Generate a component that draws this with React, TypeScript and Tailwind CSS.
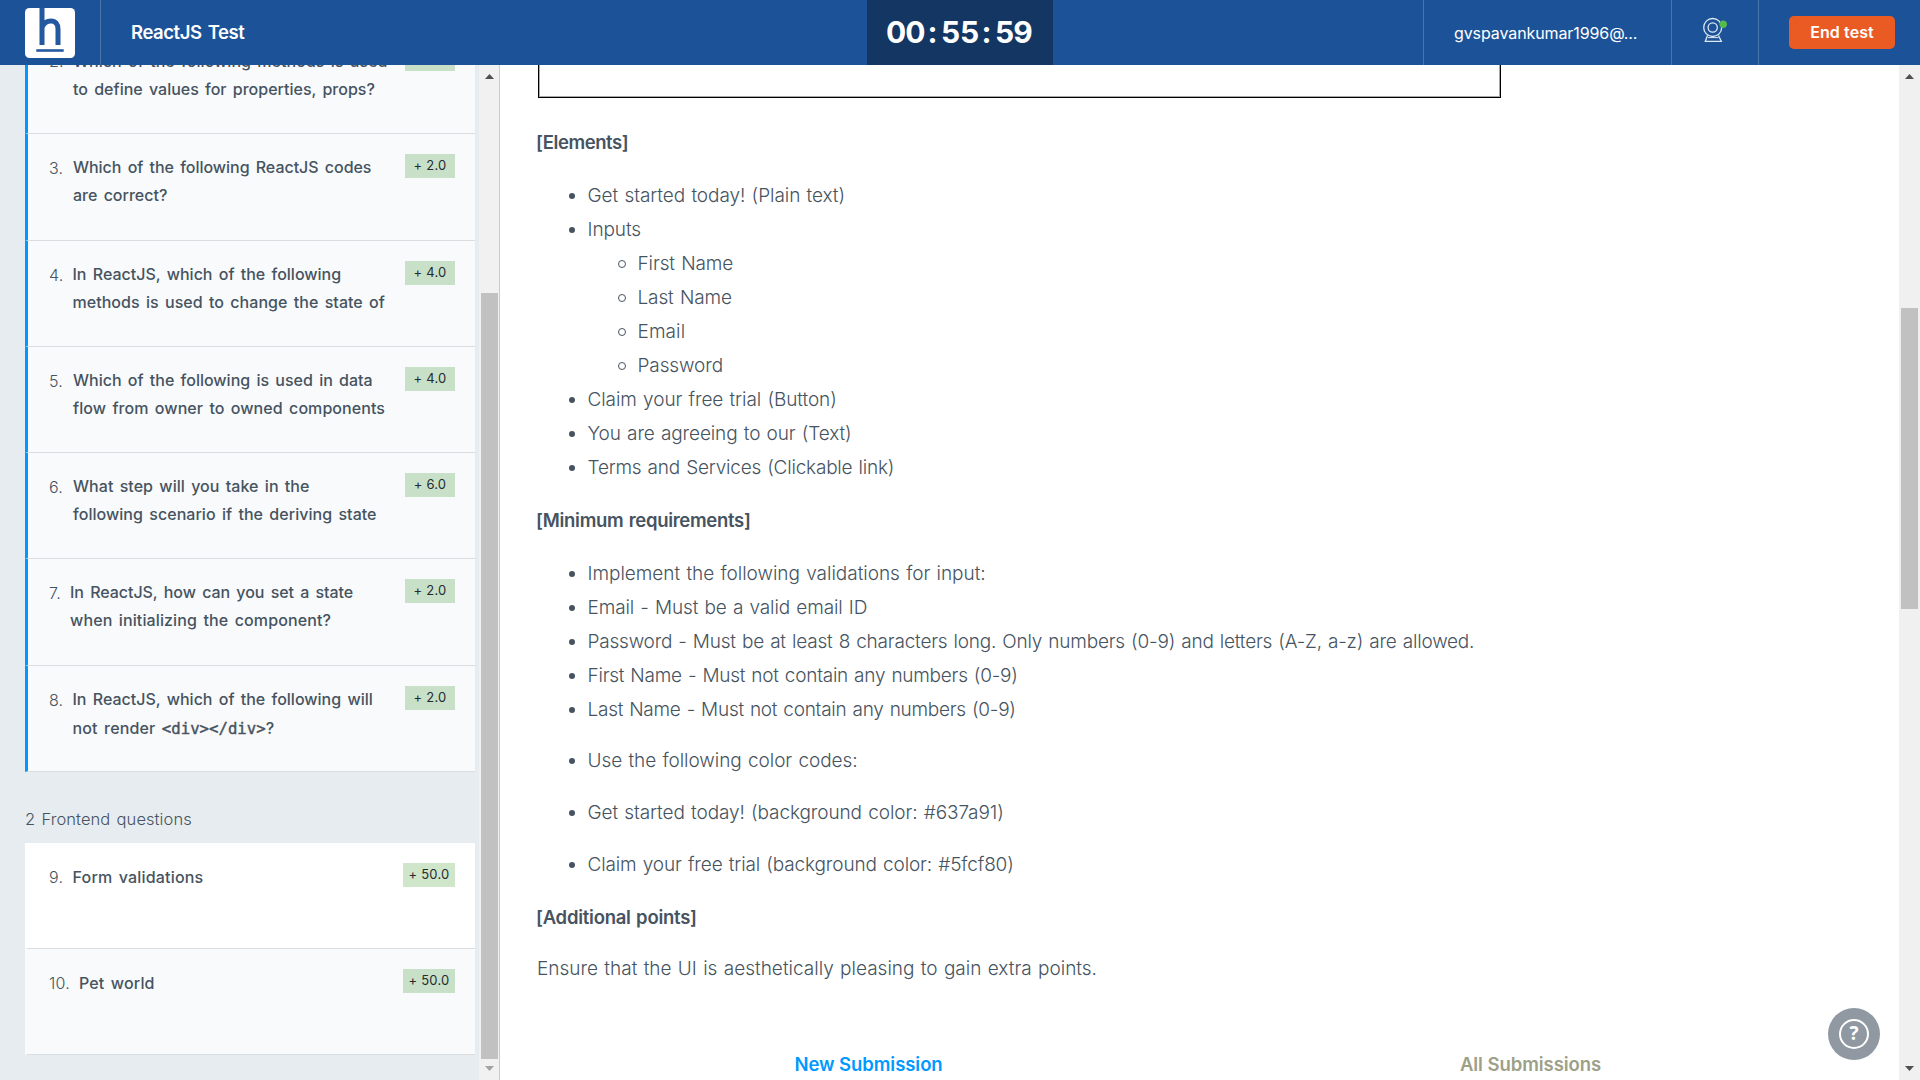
import type { ReactNode } from "react";

type Question = {
  num: string;
  numWidth: string;
  lines: { text: ReactNode; tracking?: string }[];
  score: string;
  height: string;
  textTop?: string;
  open?: boolean;
};

const codingQuestions: Question[] = [
  {
    num: "2.",
    numWidth: "w-[24px]",
    lines: [
      { text: "Which of the following methods is used", tracking: "tracking-[0.04px]" },
      { text: "to define values for properties, props?" },
    ],
    score: "+ 2.0",
    height: "h-[107px]",
    textTop: "mt-5",
  },
  {
    num: "3.",
    numWidth: "w-[24px]",
    lines: [{ text: "Which of the following ReactJS codes", tracking: "tracking-[-0.03px]" }, { text: "are correct?" }],
    score: "+ 2.0",
    height: "h-[107px]",
  },
  {
    num: "4.",
    numWidth: "w-[23.5px]",
    lines: [
      { text: "In ReactJS, which of the following" },
      { text: "methods is used to change the state of", tracking: "tracking-[0.04px]" },
    ],
    score: "+ 4.0",
    height: "h-[106px]",
  },
  {
    num: "5.",
    numWidth: "w-[24px]",
    lines: [
      { text: "Which of the following is used in data" },
      { text: "flow from owner to owned components", tracking: "tracking-[0.07px]" },
    ],
    score: "+ 4.0",
    height: "h-[106px]",
  },
  {
    num: "6.",
    numWidth: "w-[24px]",
    lines: [
      { text: "What step will you take in the", tracking: "tracking-[0.04px]" },
      { text: "following scenario if the deriving state", tracking: "tracking-[0.04px]" },
    ],
    score: "+ 6.0",
    height: "h-[106px]",
  },
  {
    num: "7.",
    numWidth: "w-[21px]",
    lines: [
      { text: "In ReactJS, how can you set a state", tracking: "tracking-[-0.04px]" },
      { text: "when initializing the component?", tracking: "tracking-[0.12px]" },
    ],
    score: "+ 2.0",
    height: "h-[107px]",
  },
  {
    num: "8.",
    numWidth: "w-[23.5px]",
    lines: [
      { text: "In ReactJS, which of the following will" },
      {
        text: (
          <div className="mt-px">
            <span className="tracking-[0.15px]">not render </span>
            <code className="bg-[#f9f9f9] font-['DejaVu_Sans_Mono',monospace] text-[15.7px] leading-none font-normal [-webkit-text-stroke:0.4px]">
              {"<div></div>"}
            </code>
            ?
          </div>
        ),
      },
    ],
    score: "+ 2.0",
    height: "h-[106px]",
  },
];

const frontendQuestions: Question[] = [
  {
    num: "9.",
    numWidth: "w-[23.5px]",
    lines: [{ text: "Form validations", tracking: "tracking-[0.18px]" }],
    score: "+ 50.0",
    height: "h-[106px]",
    textTop: "mt-5",
    open: true,
  },
  {
    num: "10.",
    numWidth: "w-[30px]",
    lines: [{ text: "Pet world", tracking: "tracking-[0.15px]" }],
    score: "+ 50.0",
    height: "h-[106px]",
    textTop: "mt-5",
  },
];

function QuestionCard({ q, bar }: { q: Question; bar: string }) {
  return (
    <li
      className={`flex shrink-0 items-start border-b border-l-[3px] border-b-[#dadee0] pl-[21px] ${bar} ${q.height} ${
        q.open ? "bg-white" : "bg-[#f8fafc]"
      }`}
    >
      <span className={`mt-5 shrink-0 text-[16px] leading-7 font-light tracking-[0.2px] ${q.numWidth}`}>{q.num}</span>
      <div
        className={`flex-1 text-[16px] leading-7 font-medium whitespace-nowrap [word-spacing:2px] ${
          q.textTop ?? "mt-[19px]"
        }`}
      >
        {q.lines.map((line, i) => (
          <div key={i} className={line.tracking}>
            {line.text}
          </div>
        ))}
      </div>
      <span
        className={`mt-5 mr-5 h-[24px] shrink-0 text-center text-[13px] leading-[22px] tracking-[0.2px] text-[#262b30] ${
          q.score.length > 5 ? "w-[52px]" : "w-[50px]"
        } ${q.open ? "bg-[#cfe6cb]" : "bg-[#c8e0c8]"}`}
      >
        {q.score}
      </span>
    </li>
  );
}

function Logo() {
  return (
    <svg width="50" height="50" viewBox="0 0 50 50" className="ml-[25px]">
      <rect width="50" height="50" rx="4.5" fill="#fff" />
      <path
        d="M17 0V37M17 19.500C18.500 15.500 22 13 26 13C30.500 13 33 16 33 21V37"
        fill="none"
        stroke="#2459a0"
        strokeWidth="5"
      />
      <path d="M11.300 42.500H38.700" stroke="#2459a0" strokeWidth="2.600" />
    </svg>
  );
}

function WebcamIcon() {
  return (
    <svg width="28" height="28" viewBox="0 0 28 28" fill="none" stroke="#dfe9f5" strokeWidth="1.300">
      <circle cx="11.700" cy="12.500" r="9" />
      <circle cx="11.700" cy="12.500" r="4.600" />
      <path d="M6.500 20.500L4.300 26.300H20.300L17.500 20.500" />
      <path d="M7 22.600H17.500" strokeWidth="1" />
      <circle cx="22.200" cy="9.200" r="3.700" fill="#57bb4c" stroke="none" />
    </svg>
  );
}

function Arrow({ down, faded }: { down?: boolean; faded?: boolean }) {
  return (
    <svg width="9" height="5" viewBox="0 0 9 5" className={faded ? "fill-[#a3a3a3]" : "fill-[#505050]"}>
      <path d={down ? "M0 0H9L4.500 5Z" : "M0 5H9L4.500 0Z"} />
    </svg>
  );
}

function Header() {
  return (
    <header className="flex h-[65px] shrink-0 bg-[#1c5398] text-white">
      <div className="flex w-[101px] border-r border-[#4975ac] pt-2">
        <Logo />
      </div>
      <h1 className="flex w-[766px] items-center pl-[30px] text-[18.5px] font-semibold tracking-[-0.45px] [word-spacing:2px]">
        ReactJS Test
      </h1>
      <div className="flex w-[186px] items-center bg-[#133662] pb-px pl-[19px] text-[30px] font-bold">
        <span className="w-[38px] tracking-[-0.9px]">00</span>
        <span className="w-[17px] text-center">:</span>
        <span className="w-[37px] tracking-[-0.2px]">55</span>
        <span className="w-[17px] text-center">:</span>
        <span className="tracking-[-0.9px]">59</span>
      </div>
      <div className="flex-1" />
      <div className="flex w-[249px] items-center border-r border-l border-[#4975ac] pl-[30px] text-[16px] tracking-[-0.1px]">
        gvspavankumar1996@...
      </div>
      <div className="flex w-[87px] border-r border-[#4975ac] pt-[15px] pl-[29px]">
        <WebcamIcon />
      </div>
      <div className="flex w-[161px] items-center pl-[30px]">
        <button className="h-[33px] w-[106px] rounded-[5px] bg-[#ea5b24] pb-px text-[16px] font-semibold tracking-[0.1px]">
          End test
        </button>
      </div>
    </header>
  );
}

function Sidebar() {
  return (
    <aside className="flex w-[500px] shrink-0 border-r border-[#cbcbcb] bg-[#e6ecef]">
      <div className="flex w-[479px] flex-col overflow-hidden pr-1 pl-[25px]">
        <ul className="-mt-[38px] flex flex-col">
          {codingQuestions.map((q) => (
            <QuestionCard key={q.num} q={q} bar="border-l-[#0099ff]" />
          ))}
        </ul>
        <h2 className="mt-[33px] h-[28px] text-[16.5px] leading-7 font-light tracking-[0.08px] whitespace-nowrap [word-spacing:1.5px]">
          2 Frontend questions
        </h2>
        <ul className="mt-[10px] flex flex-col">
          {frontendQuestions.map((q) => (
            <QuestionCard key={q.num} q={q} bar={q.open ? "border-l-white" : "border-l-[#f8fafc]"} />
          ))}
        </ul>
      </div>
      <div className="flex w-5 flex-col items-center bg-[#f1f1f1]">
        <div className="flex h-[228px] pt-[9px]">
          <Arrow />
        </div>
        <div className="h-[766px] w-[17px] bg-[#c1c1c1]" />
        <div className="pt-[7px]">
          <Arrow down faded />
        </div>
      </div>
    </aside>
  );
}

function Heading({ children, className }: { children: ReactNode; className: string }) {
  return <h3 className={`text-[18.5px] leading-[34px] font-semibold whitespace-nowrap ${className}`}>{children}</h3>;
}

function Item({ children, className = "", hollow }: { children: ReactNode; className?: string; hollow?: boolean }) {
  return (
    <li className={`flex h-[34px] items-center whitespace-nowrap ${className}`}>
      {hollow ? (
        <span className="mr-[11.5px] size-2 rounded-full border border-[#465360]" />
      ) : (
        <span className="mr-[12.5px] size-1.5 rounded-full bg-[#465360]" />
      )}
      {children}
    </li>
  );
}

function Problem() {
  return (
    <main className="flex w-[1399px] flex-col overflow-hidden pr-[38px] pl-[37px] text-[19px] font-light [word-spacing:1px]">
      <div className="ml-px h-[33px] w-[963px] shrink-0 border-r border-b border-l border-black shadow-[inset_1px_-1px_0_#a8a8a8,inset_-1px_0_0_#a8a8a8]" />
      <Heading className="mt-[27px] -ml-px tracking-[-0.42px]">[Elements]</Heading>
      <ul className="mt-5 pl-[32px]">
        <Item className="tracking-[-0.06px]">Get started today! (Plain text)</Item>
        <Item className="tracking-[-0.1px]">Inputs</Item>
        <li>
          <ul className="pl-[49px]">
            <Item hollow className="tracking-[-0.1px]">First Name</Item>
            <Item hollow className="tracking-[-0.12px]">Last Name</Item>
            <Item hollow className="tracking-[0.1px]">Email</Item>
            <Item hollow className="tracking-[-0.1px]">Password</Item>
          </ul>
        </li>
        <Item className="tracking-[-0.08px]">Claim your free trial (Button)</Item>
        <Item className="tracking-[-0.11px]">You are agreeing to our (Text)</Item>
        <Item className="tracking-[-0.21px]">Terms and Services (Clickable link)</Item>
      </ul>
      <Heading className="mt-[18px] -ml-px tracking-[-0.31px]">[Minimum requirements]</Heading>
      <ul className="mt-5 pl-[32px]">
        <Item className="tracking-[-0.03px]">Implement the following validations for input:</Item>
        <Item className="tracking-[-0.12px]">Email - Must be a valid email ID</Item>
        <Item className="tracking-[-0.205px]">
          Password - Must be at least 8 characters long. Only numbers (0-9) and letters (A-Z, a-z) are allowed.
        </Item>
        <Item className="tracking-[-0.24px]">First Name - Must not contain any numbers (0-9)</Item>
        <Item className="tracking-[-0.26px]">Last Name - Must not contain any numbers (0-9)</Item>
        <Item className="mt-[17px] tracking-[-0.05px]">Use the following color codes:</Item>
        <Item className="mt-[18px] tracking-[-0.09px]">Get started today! (background color: #637a91)</Item>
        <Item className="mt-[18px] tracking-[-0.13px]">Claim your free trial (background color: #5fcf80)</Item>
      </ul>
      <Heading className="mt-[18px] -ml-px tracking-[-0.25px]">[Additional points]</Heading>
      <p className="mt-[18px] leading-[34px]">Ensure that the UI is aesthetically pleasing to gain extra points.</p>
      <div className="mt-[61px] grid grid-cols-2 text-center text-[18.5px] leading-[34px] font-semibold tracking-[-0.06px] [word-spacing:0px]">
        <span className="pl-px text-[#0099ff]">New Submission</span>
        <span className="pl-px text-[#9da087]">All Submissions</span>
      </div>
    </main>
  );
}

export default function App() {
  return (
    <div className="flex h-[1080px] w-[1920px] flex-col overflow-hidden bg-white font-['Inter',sans-serif] text-[#465360]">
      <Header />
      <div className="flex h-[1015px]">
        <Sidebar />
        <Problem />
        <div className="flex w-[21px] flex-col items-center bg-[#f0f0f0]">
          <div className="flex h-[243px] pt-[9px]">
            <Arrow />
          </div>
          <div className="h-[301px] w-[17px] bg-[#c1c1c1]" />
          <div className="flex flex-1 items-end pb-[9px]">
            <Arrow down />
          </div>
        </div>
      </div>
      <button className="fixed top-[1008px] left-[1828px] flex size-[52px] items-center justify-center rounded-full bg-[#9099a1]">
        <span className="flex size-[30px] items-center justify-center rounded-full border-2 border-white pb-px font-['Open_Sans',sans-serif] text-[19px] font-bold text-white">
          ?
        </span>
      </button>
    </div>
  );
}
